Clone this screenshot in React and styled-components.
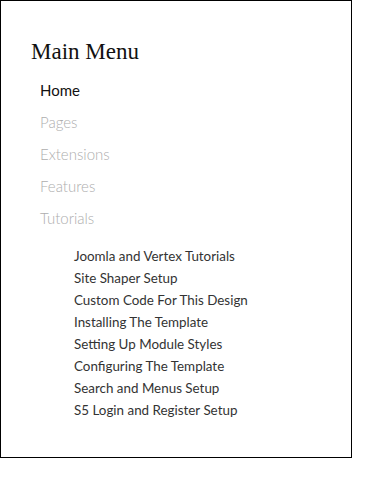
import React from "react";
import styled, { createGlobalStyle } from "styled-components";

const Global = createGlobalStyle`
  html, body { margin: 0; padding: 0; background: #fff; }
`;

const Panel = styled.div`
  box-sizing: border-box;
  width: 352px;
  height: 458px;
  border: 1px solid #000;
  padding: 37px 0 0 30px;
`;

const Title = styled.h3`
  margin: 0 0 8px 0;
  font-family: "Liberation Serif", "DejaVu Serif", serif;
  font-weight: 400;
  font-size: 23px;
  line-height: 28px;
  color: #111;
`;

const MenuList = styled.ul`
  list-style: none;
  margin: 0;
  padding: 0 0 0 9px;
`;

const MenuItem = styled.li`
  font-family: Lato, "Open Sans", sans-serif;
  font-weight: ${(p) => (p.$active ? 400 : 300)};
  font-size: 15px;
  line-height: 32px;
  color: ${(p) => (p.$active ? "#111" : "#aeaeae")};
`;

const SubList = styled.ul`
  list-style: none;
  margin: 11px 0 0 0;
  padding: 0 0 0 34px;
`;

const SubItem = styled.li`
  font-family: Lato, "Open Sans", sans-serif;
  font-weight: 400;
  font-size: 13.4px;
  line-height: 22px;
  color: #333;
`;

const items = ["Home", "Pages", "Extensions", "Features", "Tutorials"];
const subs = [
  "Joomla and Vertex Tutorials",
  "Site Shaper Setup",
  "Custom Code For This Design",
  "Installing The Template",
  "Setting Up Module Styles",
  "Configuring The Template",
  "Search and Menus Setup",
  "S5 Login and Register Setup",
];

export default function App() {
  return (
    <>
      <Global />
      <Panel>
        <Title>Main Menu</Title>
        <MenuList>
          {items.map((it, i) => (
            <MenuItem key={it} $active={i === 0}>
              {it}
              {it === "Tutorials" && (
                <SubList>
                  {subs.map((s) => (
                    <SubItem key={s}>{s}</SubItem>
                  ))}
                </SubList>
              )}
            </MenuItem>
          ))}
        </MenuList>
      </Panel>
    </>
  );
}
